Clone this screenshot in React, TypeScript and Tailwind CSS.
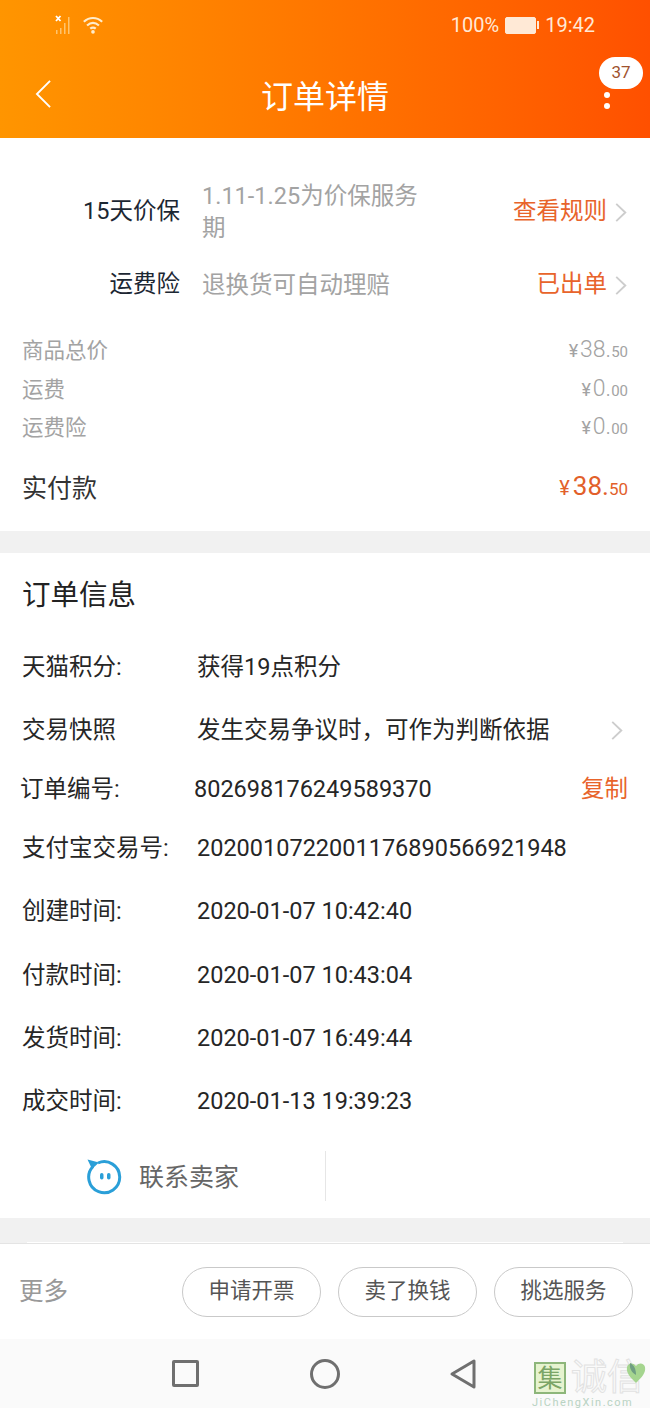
import { ReactNode } from 'react';

const FONT = 'font-[Roboto,"Noto_Sans_CJK_SC",sans-serif]';

const Chevron = ({ className }: { className: string }) => (
  <svg viewBox="0 0 14 22" className={className} fill="none" stroke="currentColor" strokeWidth="2">
    <path d="M2 2l9.5 9L2 20" />
  </svg>
);

const ServiceRow = ({ label, note, link, rowClass }: { label: string; note: ReactNode; link: string; rowClass: string }) => (
  <div className={`flex items-center pr-[22px] ${rowClass}`}>
    <div className="w-[180px] shrink-0 text-right text-[23.5px] text-[#1c2733]">{label}</div>
    <div className="ml-[22px] w-[222px] shrink-0 text-[23.5px] leading-[32px] text-[#a3a3a3]">{note}</div>
    <div className="ml-auto flex items-center gap-[7px] text-[23.5px] text-[#e8642b]">
      {link}
      <Chevron className="h-[21px] w-[14px] text-[#cdcdcd]" />
    </div>
  </div>
);

const Price = ({ int, dec, tone }: { int: string; dec: string; tone: string }) => (
  <div className={`flex items-baseline pb-[2px] ${tone}`}>
    <span className="mr-[2px] text-[18px]">¥</span>
    <span className="text-[23px] font-light">{int}.</span>
    <span className="text-[15px]">{dec}</span>
  </div>
);

const FeeRow = ({ label, int, dec }: { label: string; int: string; dec: string }) => (
  <div className="flex h-[38.5px] items-center justify-between px-[22px] text-[21.5px] text-[#a3a3a3]">
    <span>{label}</span>
    <Price int={int} dec={dec} tone="text-[#a3a3a3]" />
  </div>
);

const InfoRow = ({ label, value, h, children, tight = false }: { label: string; value: string; h: string; children?: ReactNode; tight?: boolean }) => (
  <div className={`flex items-center pr-[22px] text-[23.5px] text-[#262626] ${h}`}>
    <span className={`w-0 whitespace-nowrap ${tight ? 'ml-[20px]' : 'ml-[22px]'}`}>{label}</span>
    <span className={`whitespace-nowrap ${tight ? 'ml-[174px]' : 'ml-[175px]'}`}>{value}</span>
    {children}
  </div>
);

const Pill = ({ text }: { text: string }) => (
  <div className="flex h-[50px] w-[139px] items-center justify-center rounded-[25px] border border-[#c9c9c9] text-[21.5px] text-[#555]">{text}</div>
);

export default function App() {
  return (
    <div className={`flex h-[1408px] w-[650px] flex-col overflow-hidden bg-white ${FONT}`}>
      {/* header */}
      <div className="relative h-[138px] shrink-0 bg-gradient-to-r from-[#ff9500] to-[#ff5000] text-white">
        <div className="flex h-[50px] items-center pl-[55px] pr-[55px]">
          <svg viewBox="0 0 22 20" className="h-[20px] w-[22px]">
            <path d="M1 1l4.500 5M5.500 1L1 6" stroke="#fff" strokeWidth="1.800" fill="none" />
            <g fill="#ffc46e">
              <rect x="1" y="15" width="1.500" height="4" />
              <rect x="5" y="13" width="1.500" height="6" />
              <rect x="9" y="8" width="1.500" height="11" />
              <rect x="13" y="2" width="1.500" height="17" />
            </g>
          </svg>
          <svg viewBox="0 0 24 20" className="ml-[5px] h-[20px] w-[22px] text-[#ffeccb]" fill="none" stroke="currentColor" strokeWidth="2.400">
            <path d="M2 6.500c6-5.500 14-5.500 20 0M5.500 10.500c4-3.500 9-3.500 13 0M9 14c1.800-1.500 4.200-1.500 6 0" />
            <circle cx="12" cy="17.500" r="2" fill="currentColor" stroke="none" />
          </svg>
          <div className="ml-auto flex items-center text-[20px] text-[#ffe9d6]">
            <span className="-ml-[2px]">100%</span>
            <div className="mx-[6px] flex items-center">
              <div className="h-[17px] w-[31px] rounded-[2px] border border-[#ffe9d6] bg-[#ffe9d6]" />
              <div className="ml-[1px] h-[8px] w-[2px] bg-[#ffe9d6]" />
            </div>
            19:42
          </div>
        </div>
        <div className="relative flex h-[88px] items-center justify-center pt-[5px]">
          <svg viewBox="0 0 18 32" className="absolute left-[35px] top-[29px] h-[30px] w-[17px]" fill="none" stroke="currentColor" strokeWidth="2">
            <path d="M16 2L2 16l14 14" />
          </svg>
          <span className="text-[32px]">订单详情</span>
          <div className="absolute left-[599px] top-[7px] flex h-[32px] w-[44px] items-center justify-center rounded-[16px] bg-white text-[17px] text-[#a0522d]">37</div>
          <div className="absolute left-[604px] top-[42px] flex flex-col gap-[5px]">
            <div className="h-[6px] w-[6px] rounded-full bg-white" />
            <div className="h-[6px] w-[6px] rounded-full bg-white" />
          </div>
        </div>
      </div>

      {/* services and prices */}
      <div className="h-[393px] shrink-0 pt-[42px]">
        <ServiceRow label="15天价保" note="1.11-1.25为价保服务期" link="查看规则" rowClass="h-[64px]" />
        <ServiceRow label="运费险" note="退换货可自动理赔" link="已出单" rowClass="mt-[25px] h-[32px]" />
        <div className="mt-[31px]">
          <FeeRow label="商品总价" int="38" dec="50" />
          <FeeRow label="运费" int="0" dec="00" />
          <FeeRow label="运费险" int="0" dec="00" />
        </div>
        <div className="mt-[19px] flex items-center justify-between px-[22px]">
          <span className="text-[25px] text-[#333]">实付款</span>
          <div className="flex items-baseline pb-[5px] text-[#e2602a]">
            <span className="mr-[3px] text-[20px]">¥</span>
            <span className="text-[26px]">38.</span>
            <span className="text-[17px]">50</span>
          </div>
        </div>
      </div>

      <div className="h-[22px] shrink-0 bg-[#f1f1f1]" />

      {/* order info */}
      <div className="h-[665px] shrink-0">
        <div className="flex h-[83px] items-center pl-[22px] pt-[3px] text-[28.5px] text-[#222]">订单信息</div>
        <InfoRow label="天猫积分:" value="获得19点积分" h="h-[63px]" />
        <InfoRow label="交易快照" value="发生交易争议时，可作为判断依据" h="h-[63px]">
          <Chevron className="ml-auto mr-[4px] h-[21px] w-[14px] text-[#cdcdcd]" />
        </InfoRow>
        <InfoRow label="订单编号:" value="802698176249589370" h="h-[55px]" tight>
          <span className="ml-auto text-[#e8642b]">复制</span>
        </InfoRow>
        <InfoRow label="支付宝交易号:" value="2020010722001176890566921948" h="h-[63px]" />
        <InfoRow label="创建时间:" value="2020-01-07 10:42:40" h="h-[64px]" />
        <InfoRow label="付款时间:" value="2020-01-07 10:43:04" h="h-[63px]" />
        <InfoRow label="发货时间:" value="2020-01-07 16:49:44" h="h-[63px]" />
        <InfoRow label="成交时间:" value="2020-01-13 19:39:23" h="h-[64px]" />
        <div className="mt-[17px] flex h-[50px] items-center">
          <div className="flex h-[50px] w-[326px] items-center border-r border-[#e6e6e6] pl-[86px]">
            <svg viewBox="0 0 36 36" className="mt-[2px] h-[36px] w-[36px]" fill="none">
              <path d="M7 7.500A15.500 15.500 0 1 0 12 4" stroke="#2a9fd8" strokeWidth="3" />
              <path d="M1.500 0.500L13 3.500 6 10z" fill="#2a9fd8" />
              <rect x="14" y="14" width="3.500" height="6.500" rx="1.700" fill="#2a9fd8" />
              <rect x="21" y="14" width="3.500" height="6.500" rx="1.700" fill="#2a9fd8" />
            </svg>
            <span className="ml-[17px] mt-[4px] text-[25px] text-[#666]">联系卖家</span>
          </div>
        </div>
      </div>

      <div className="flex h-[26px] shrink-0 items-end border-b border-[#e4e4e4] bg-[#f1f1f1] px-[27px]">
        <div className="h-[1px] w-full bg-white" />
      </div>

      {/* bottom actions */}
      <div className="flex h-[95px] shrink-0 items-center gap-[17px] pl-[19px] pr-[17px]">
        <span className="mr-auto pt-[2px] text-[24.5px] text-[#999]">更多</span>
        <Pill text="申请开票" />
        <Pill text="卖了换钱" />
        <Pill text="挑选服务" />
      </div>

      {/* android nav */}
      <div className="relative flex flex-1 items-center bg-[#fafafa] pl-[172px]">
        <div className="h-[27px] w-[27px] rounded-[2px] border-[3px] border-[#6f6f6f]" />
        <div className="ml-[111px] h-[30px] w-[30px] rounded-full border-[3px] border-[#6f6f6f]" />
        <svg viewBox="0 0 28 32" className="ml-[109px] h-[32px] w-[28px]" fill="none" stroke="#6f6f6f" strokeWidth="3" strokeLinejoin="round">
          <path d="M25 3v26L3 16z" />
        </svg>
        {/* watermark */}
        <div className="absolute left-[532px] top-[21px] w-[118px]">
          <div className="ml-[2px] flex items-center gap-[5px]">
            <div className="flex h-[32px] w-[32px] items-center justify-center border-2 border-[#8db67a] bg-[#e6f3cf] text-[25px] leading-none text-[#7ba566]">集</div>
            <span className="whitespace-nowrap text-[36px] leading-none text-transparent [-webkit-text-stroke:1px_#e2e2e2]">诚信</span>
          </div>
          <div className="whitespace-nowrap text-[11px] leading-[14px] tracking-[1.500px] text-[#b9d3c3]">JiChengXin.com</div>
          <svg viewBox="0 0 24 24" className="absolute left-[92px] top-[0px] h-[24px] w-[24px]">
            <path d="M12 23C6 17 2 13 3 7c1-4 6-5 9-1 3-4 8-3 9 1 1 6-3 10-9 16z" fill="#a5d58f" />
            <path d="M6 3c4 2 6 6 6 12-4-2-7-7-6-12z" fill="#6f9e82" />
          </svg>
        </div>
      </div>
    </div>
  );
}
